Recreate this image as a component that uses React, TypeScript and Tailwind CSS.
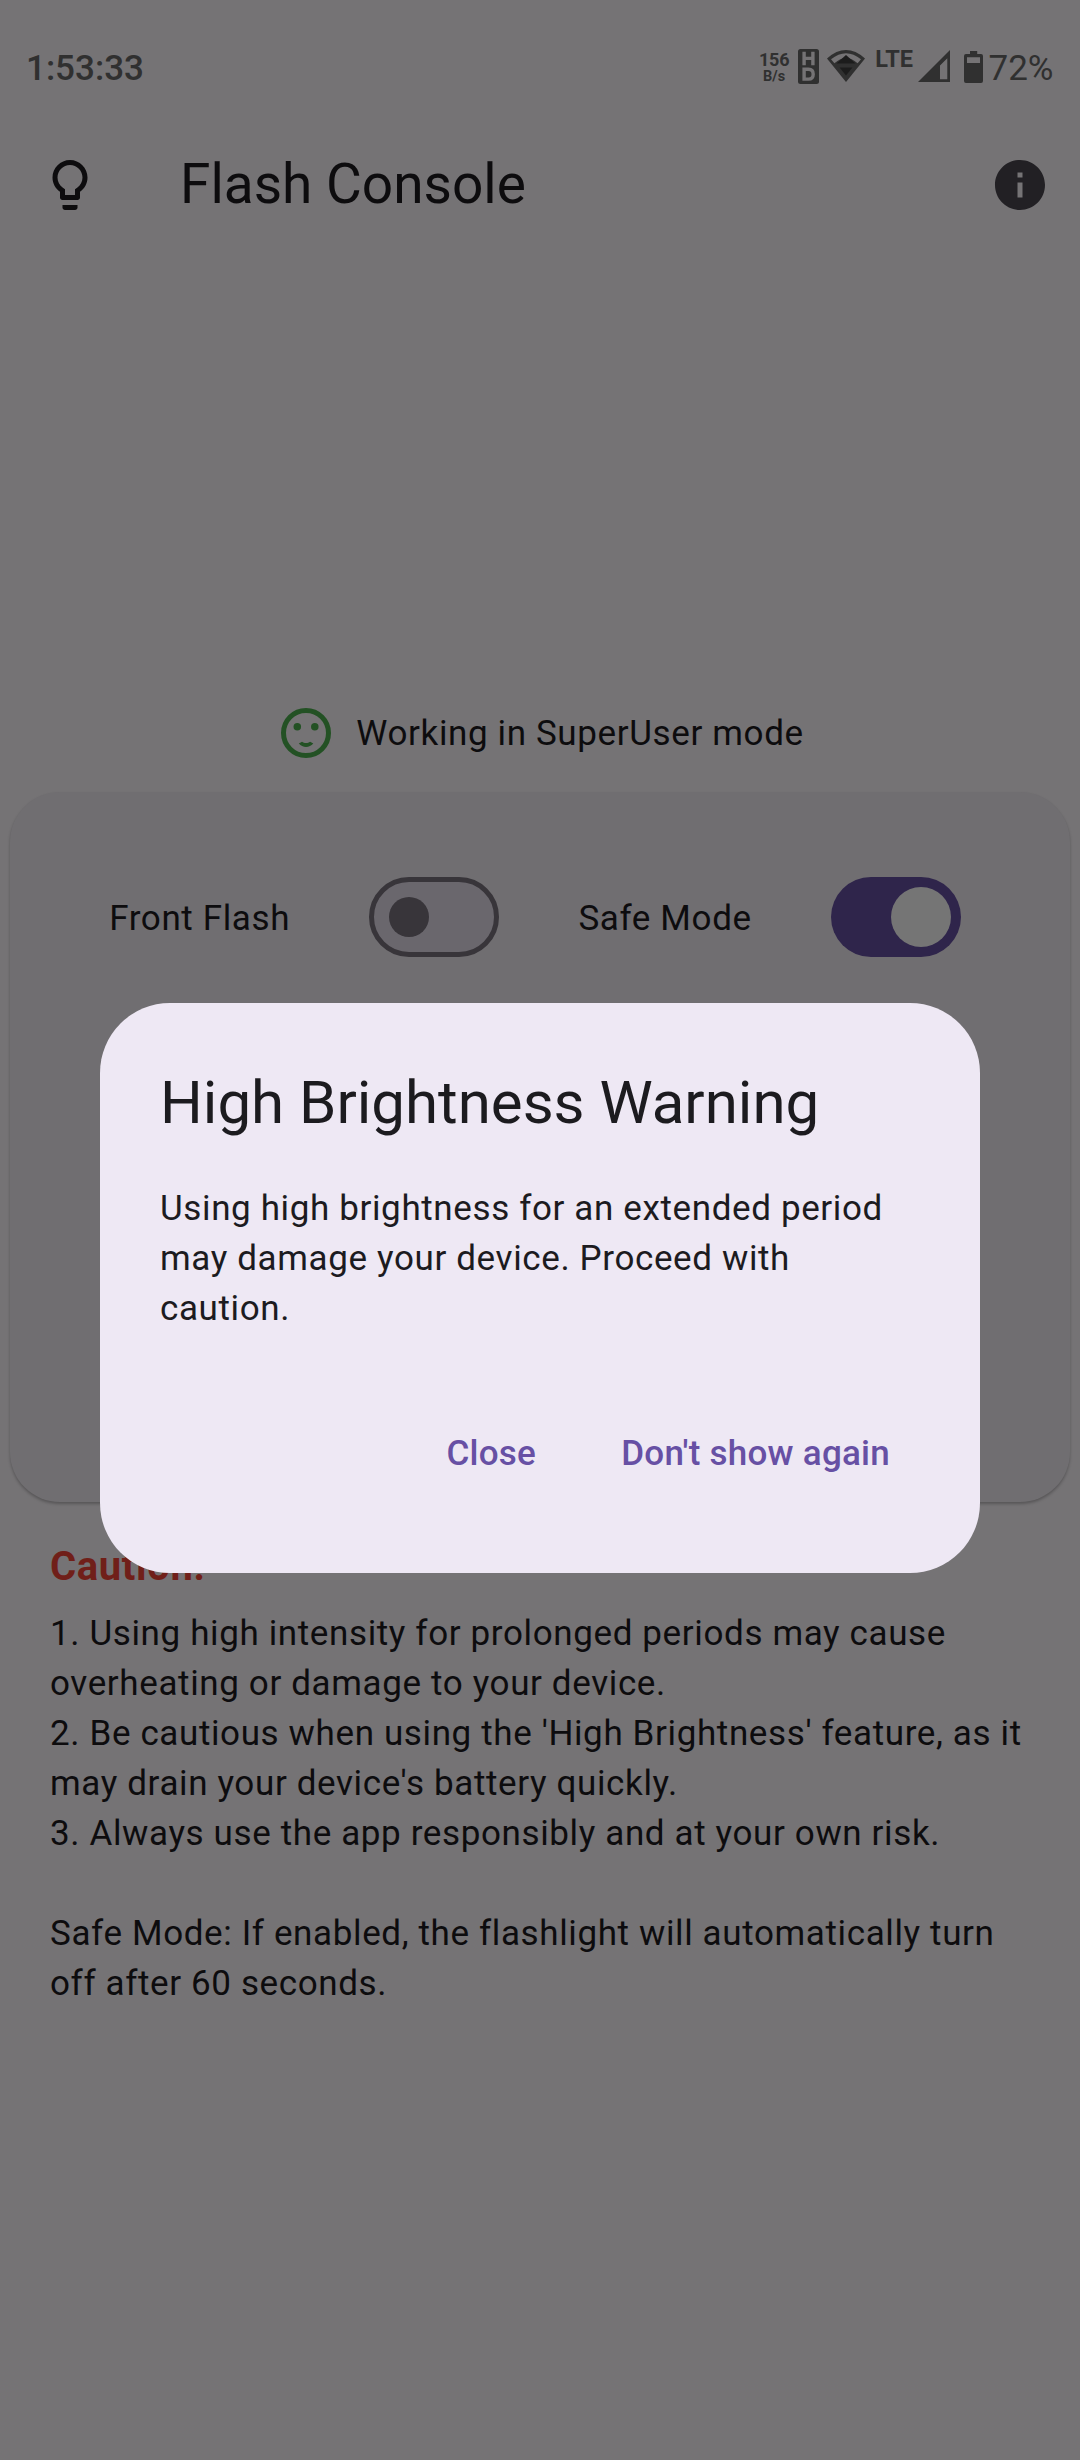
import React from "react";

function BulbIcon() {
  return (
    <svg viewBox="0 0 24 24" className="size-[60px] fill-[#0d0c0e]">
      <path d="M9 21c0 .55.45 1 1 1h4c.55 0 1-.45 1-1v-1H9v1z" />
      <path d="M12 2C8.14 2 5 5.14 5 9c0 2.38 1.19 4.47 3 5.74V17c0 .55.45 1 1 1h6c.55 0 1-.45 1-1v-2.26c1.81-1.27 3-3.36 3-5.74 0-3.86-3.14-7-7-7zm2.85 11.1l-.85.6V16h-4v-2.3l-.85-.6C7.8 12.16 7 10.63 7 9c0-2.76 2.24-5 5-5s5 2.24 5 5c0 1.63-.8 3.16-2.15 4.1z" />
    </svg>
  );
}

function InfoIcon() {
  return (
    <svg viewBox="0 0 24 24" className="size-[60px] fill-[#222024]">
      <path d="M12 2C6.48 2 2 6.48 2 12s4.48 10 10 10 10-4.48 10-10S17.52 2 12 2zm1 15h-2v-6h2v6zm0-8h-2V7h2v2z" />
    </svg>
  );
}

function FaceIcon() {
  return (
    <svg viewBox="0 0 60 60" className="size-[60px] shrink-0">
      <circle cx="30" cy="30" r="22.5" fill="none" stroke="#235124" strokeWidth="5" />
      <circle cx="21.3" cy="23.8" r="3.75" fill="#235124" />
      <circle cx="38.8" cy="23.8" r="3.75" fill="#235124" />
      <path d="M22.8 40.5 L26 38.7 C28.3 40.5 31.8 40.5 34.1 38.7 L37.3 40.5 C33.4 45 26.7 45 22.8 40.5 Z" fill="#235124" />
    </svg>
  );
}

function HdIcon() {
  return (
    <svg viewBox="0 0 21 35" className="h-[35px] w-[21px]">
      <rect width="21" height="35" rx="2.5" fill="#303030" />
      <g fill="none" stroke="#757375" strokeWidth="3.4">
        <path d="M6.1 2.8v13.4M14.9 2.8v13.4M6.1 9.4h8.8" />
        <path d="M6.1 20.3h4.4q4.7 0 4.7 4.9t-4.7 4.9H6.1z" />
      </g>
    </svg>
  );
}

function WifiIcon() {
  return (
    <svg viewBox="0 0 38 32" className="h-[32px] w-[38px]">
      <path d="M0 8.5Q19-8.3 38 8.5L19 32Z" fill="#303030" />
      <path d="M4 9.3Q19-3 34 9.3L30.6 13.3Q24.5 8.4 19 7.6Q13.5 8.4 7.4 13.3Z" fill="#757375" />
      <path d="M19 5L28.5 13.5H9.5Z" fill="#1c1c1c" />
      <path d="M12.6 17.5H25.4L19 25.5Z" fill="#1c1c1c" />
    </svg>
  );
}

function SignalIcon() {
  return (
    <svg viewBox="0 0 32 32" className="h-[32px] w-[32px]">
      <path fillRule="evenodd" d="M32 0V32H0ZM29.3 8.3L22 15.6V29.3H29.3Z" fill="#303030" />
    </svg>
  );
}

function BatteryIcon() {
  return (
    <svg viewBox="0 0 19 32" className="h-[32px] w-[19px]">
      <path
        fillRule="evenodd"
        d="M6 0h7.2v3H17a2 2 0 0 1 2 2V30a2 2 0 0 1-2 2H2a2 2 0 0 1-2-2V5a2 2 0 0 1 2-2H6ZM3 6.2V12H16V6.2Z"
        fill="#303030"
      />
    </svg>
  );
}

function StatusBar() {
  return (
    <header className="flex h-[100px] items-start justify-between pr-[26.5px] pl-[26px] text-[35px] leading-[40px] text-[#303030]">
      <span className="mt-[49px] font-medium">1:53:33</span>
      <div className="flex items-start">
        <div className="mt-[51px] mr-[8px] flex w-[31px] flex-col items-center font-bold">
          <span className="text-[18px] leading-[18px] tracking-[-0.3px]">156</span>
          <span className="text-[14.5px] leading-[16px]">B/s</span>
        </div>
        <div className="mt-[49px] mr-[8px]">
          <HdIcon />
        </div>
        <div className="mt-[50px] mr-[10.5px]">
          <WifiIcon />
        </div>
        <span className="mt-[48px] mr-[5px] text-[23.5px] leading-[22px] font-bold">LTE</span>
        <div className="mt-[50px] mr-[14px]">
          <SignalIcon />
        </div>
        <div className="mt-[51px] mr-[5.5px]">
          <BatteryIcon />
        </div>
        <span className="mt-[49px]">72%</span>
      </div>
    </header>
  );
}

function Switch({ on }: { on: boolean }) {
  return (
    <div className="px-[10px]">
      {on ? (
        <div className="flex h-[80px] w-[130px] items-center justify-end rounded-full bg-[#2f254b] pr-[10px]">
          <div className="size-[60px] rounded-full bg-[#757575]" />
        </div>
      ) : (
        <div className="flex h-[80px] w-[130px] items-center rounded-full border-[5px] border-[#38353a] bg-[#6a676d] pl-[15px]">
          <div className="size-[40px] rounded-full bg-[#38353a]" />
        </div>
      )}
    </div>
  );
}

function WarningDialog() {
  return (
    <div className="absolute inset-0 flex items-center justify-center pt-[115px]">
      <div className="flex h-[570px] w-[880px] flex-col rounded-[70px] bg-[#eee8f4] p-[60px] text-[#1c1b1f]">
        <h2 className="text-[60px] leading-[80px]">High Brightness Warning</h2>
        <p className="mt-[41px] text-[35px] leading-[50px] tracking-[0.625px]">
          Using high brightness for an extended period
          <br />
          may damage your device. Proceed with
          <br />
          caution.
        </p>
        <div className="mt-[59px] flex h-[120px] items-center justify-end gap-[20px] text-[35px] leading-[50px] font-medium tracking-[0.25px] text-[#6750a4]">
          <button className="h-[100px] min-w-[160px] px-[30px] pt-[2px]">Close</button>
          <button className="h-[100px] px-[30px] pt-[2px]">Don't show again</button>
        </div>
      </div>
    </div>
  );
}

export default function App() {
  return (
    <div className="relative h-[2460px] w-[1080px] overflow-hidden bg-[#757375] font-[Roboto,sans-serif] text-[#0d0c0e]">
      <StatusBar />
      <div className="flex h-[170px] items-center px-[30px]">
        <div className="flex w-[150px] pl-[10px]">
          <BulbIcon />
        </div>
        <h1 className="flex-1 pb-[2px] text-[55px] leading-[70px]">Flash Console</h1>
        <InfoIcon />
      </div>
      <main className="pt-[433px]">
        <div className="flex h-[60px] items-center justify-center gap-[20px] text-[35px] leading-[50px] tracking-[0.625px]">
          <FaceIcon />
          <span className="pt-[2px]">Working in SuperUser mode</span>
        </div>
        <section className="mx-[10px] mt-[29px] h-[710px] rounded-[50px] bg-[#706e71] px-[30px] pt-[85px] shadow-[0_2px_3px_rgba(0,0,0,0.25)]">
          <div className="flex items-center justify-evenly text-[35px] leading-[50px] tracking-[0.625px]">
            <span className="pt-[3px]">Front Flash</span>
            <Switch on={false} />
            <span className="pt-[3px]">Safe Mode</span>
            <Switch on={true} />
          </div>
        </section>
        <section className="px-[50px] pt-[40px]">
          <h3 className="text-[40px] leading-[50px] font-bold tracking-[0.625px] text-[#701f19]">Caution:</h3>
          <p className="mt-[17px] text-[35px] leading-[50px] tracking-[0.625px]">
            1. Using high intensity for prolonged periods may cause
            <br />
            overheating or damage to your device.
            <br />
            2. Be cautious when using the 'High Brightness' feature, as it
            <br />
            may drain your device's battery quickly.
            <br />
            3. Always use the app responsibly and at your own risk.
            <br />
            <br />
            Safe Mode: If enabled, the flashlight will automatically turn
            <br />
            off after 60 seconds.
          </p>
        </section>
      </main>
      <WarningDialog />
    </div>
  );
}
